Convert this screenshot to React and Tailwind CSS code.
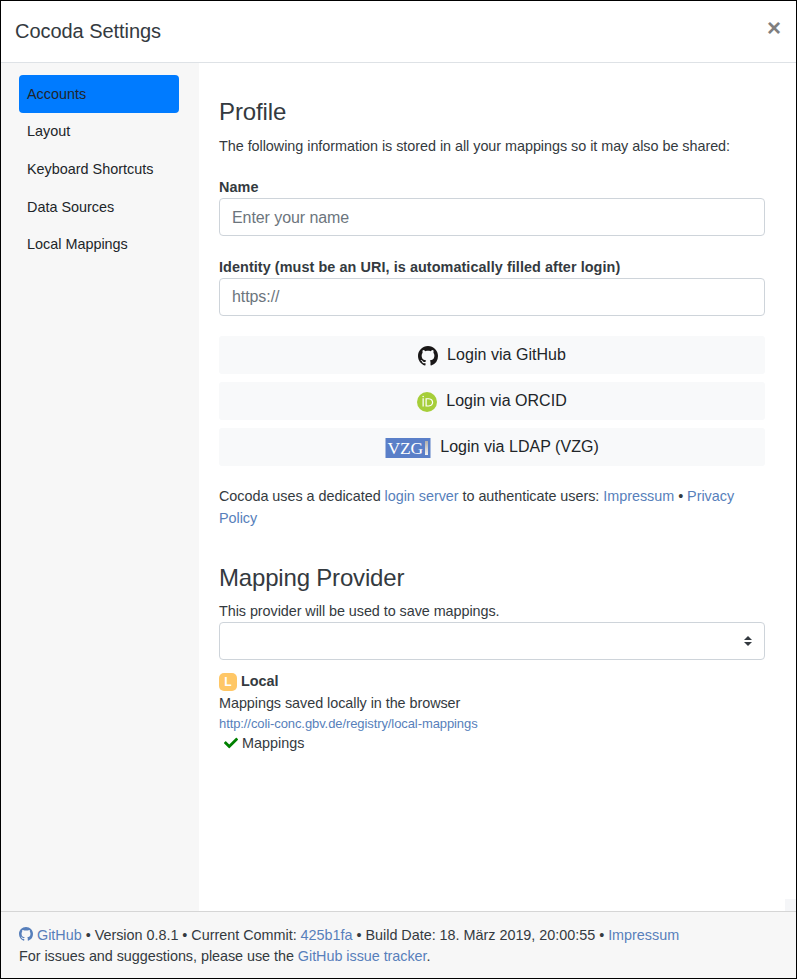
import React from "react";

const GITHUB_PATH =
  "M8 0C3.58 0 0 3.58 0 8c0 3.54 2.29 6.53 5.47 7.59.4.07.55-.17.55-.38 0-.19-.01-.82-.01-1.49-2.01.37-2.53-.49-2.69-.94-.09-.23-.48-.94-.82-1.13-.28-.15-.68-.52-.01-.53.63-.01 1.08.58 1.23.82.72 1.21 1.87.87 2.33.66.07-.52.28-.87.51-1.07-1.78-.2-3.64-.89-3.64-3.95 0-.87.31-1.59.82-2.15-.08-.2-.36-1.02.08-2.12 0 0 .67-.21 2.2.82.64-.18 1.32-.27 2-.27s1.36.09 2 .27c1.53-1.04 2.2-.82 2.2-.82.44 1.1.16 1.92.08 2.12.51.56.82 1.27.82 2.15 0 3.07-1.87 3.75-3.65 3.95.29.25.54.73.54 1.48 0 1.07-.01 1.93-.01 2.2 0 .21.15.46.55.38A8.01 8.01 0 0 0 16 8c0-4.42-3.58-8-8-8z";

function GitHubIcon({ className }) {
  return (
    <svg viewBox="0 0 16 16" fill="currentColor" className={className}>
      <path fillRule="evenodd" d={GITHUB_PATH} />
    </svg>
  );
}

function OrcidIcon() {
  return (
    <svg viewBox="0 0 256 256" className="mt-0.5 mr-[9px] size-5">
      <circle cx="128" cy="128" r="128" fill="#A6CE39" />
      <g fill="#fff">
        <path d="M70.9 79.1h15.4v107.1H70.9z" />
        <path d="M108.9 79.1h41.6c39.6 0 57 28.3 57 53.6 0 27.5-21.5 53.6-56.8 53.6h-41.8V79.1zm15.4 93.3h24.5c34.9 0 42.9-26.5 42.9-39.7 0-21.5-13.7-39.7-43.7-39.7h-23.7v79.4z" />
        <circle cx="78.6" cy="56.8" r="10.1" />
      </g>
    </svg>
  );
}

function VzgIcon() {
  return (
    <span className="mt-0.5 mr-[9px] flex h-5 w-[46px] items-center border-x border-[#a9bce0] bg-[#5a7fc8] pl-px">
      <span className="w-[36px] font-['Liberation_Serif',serif] text-[17.5px] leading-5 tracking-[-0.2px] text-white">VZG</span>
      <span className="ml-0.5 h-3.5 w-[3px] bg-gradient-to-b from-[#b0aeab] to-[#f4f4f4]" />
    </span>
  );
}

const A = ({ children }) => <a className="text-[#577fbb]">{children}</a>;

const TABS = ["Accounts", "Layout", "Keyboard Shortcuts", "Data Sources", "Local Mappings"];

function LoginButton({ icon, children }) {
  return (
    <button className="mb-2 flex h-[38px] w-full items-center justify-center rounded-[3px] bg-[#f8f9fa] text-base tracking-[0.03px] text-[#212529]">
      {icon}
      <span className="mt-px">{children}</span>
    </button>
  );
}

function Field({ label, placeholder, inputClass = "" }) {
  return (
    <div className="mt-5">
      <label className="block h-[22px] pt-px font-bold leading-[21px] tracking-[0.075px]">{label}</label>
      <input
        placeholder={placeholder}
        className={
          "block h-[38px] w-full rounded border border-[#ced4da] bg-white px-3 text-base tracking-[-0.08px] placeholder:text-[#6c757d] " +
          inputClass
        }
      />
    </div>
  );
}

export default function App() {
  return (
    <div className="flex h-[979px] w-[797px] flex-col border border-black bg-white font-['Liberation_Sans',Arial,sans-serif] text-[14.4px] leading-[21.6px] text-[#343a40]">
      <header className="flex h-[62px] shrink-0 justify-between border-b border-[#dee2e6] pr-[15px] pl-3.5">
        <h5 className="pt-[15px] text-xl leading-[30px] tracking-[-0.05px]">Cocoda Settings</h5>
        <button className="h-[54px] text-[24px] leading-[54px] font-bold text-[#7f7f7f]">×</button>
      </header>
      <div className="flex min-h-0 flex-1">
        <nav className="w-[198px] shrink-0 bg-[#f7f7f7] px-[18px] pt-3">
          {TABS.map((tab, i) => (
            <div
              key={tab}
              className={
                i === 0
                  ? "w-[160px] rounded bg-[#007bff] px-2 pt-[8.9px] pb-[7.1px] text-[#212529]"
                  : "w-[160px] rounded px-2 pt-[8.9px] pb-[7.1px] text-[#212529]"
              }
            >
              {tab}
            </div>
          ))}
        </nav>
        <main className="flex flex-1 flex-col pl-5">
          <div className="w-[546px] flex-1 pt-[35px]">
            <h4 className="mb-2 text-2xl leading-[28.8px] tracking-[-0.1px]">Profile</h4>
            <p className="h-[21px] pt-px leading-[21px] tracking-[-0.04px]">
              The following information is stored in all your mappings so it may also be shared:
            </p>
            <Field label="Name" placeholder="Enter your name" inputClass="pt-0.5" />
            <Field label="Identity (must be an URI, is automatically filled after login)" placeholder="https://" />
            <div className="mt-5">
              <LoginButton icon={<GitHubIcon className="mt-0.5 mr-[9px] size-5 text-[#191717]" />}>Login via GitHub</LoginButton>
              <LoginButton icon={<OrcidIcon />}>Login via ORCID</LoginButton>
              <LoginButton icon={<VzgIcon />}>Login via LDAP (VZG)</LoginButton>
            </div>
            <p className="mt-[19px] leading-[22px] tracking-[-0.035px]">
              Cocoda uses a dedicated <A>login server</A> to authenticate users: <A>Impressum</A> • <A>Privacy Policy</A>
            </p>
            <h4 className="mt-[35px] mb-2 text-2xl leading-[28.8px] tracking-[-0.18px]">Mapping Provider</h4>
            <p className="h-[21px] tracking-[-0.06px]">This provider will be used to save mappings.</p>
            <div className="flex h-[38px] items-center justify-end rounded border border-[#ced4da] pr-3">
              <svg viewBox="0 0 4 5" className="h-2.5 w-2" fill="#343a40">
                <path d="M2 0L0 2h4zm0 5L0 3h4z" />
              </svg>
            </div>
            <div className="mt-[11px] flex h-[22px] items-center font-bold">
              <span className="mr-1 flex size-[18px] items-center justify-center rounded-[5px] bg-[#ffc766] text-xs text-white">
                L
              </span>
              Local
            </div>
            <p className="tracking-[-0.05px]">Mappings saved locally in the browser</p>
            <p className="h-[19px] text-[13px] leading-[19px] tracking-[-0.09px]">
              <A>http://coli-conc.gbv.de/registry/local-mappings</A>
            </p>
            <div className="flex items-center pl-[5px]">
              <svg viewBox="0 0 512 512" className="mr-1 -mt-px size-3.5" fill="#008000">
                <path d="M173.898 439.404l-166.4-166.4c-9.997-9.997-9.997-26.206 0-36.204l36.203-36.204c9.997-9.998 26.207-9.998 36.204 0L192 312.69 432.095 72.596c9.997-9.997 26.207-9.997 36.204 0l36.203 36.204c9.997 9.997 9.997 26.206 0 36.204l-294.4 294.401c-9.998 9.997-26.207 9.997-36.204-.001z" />
              </svg>
              Mappings
            </div>
          </div>
          <div className="h-3 w-[11px] self-end bg-[#f5f6f8]" />
        </main>
      </div>
      <footer className="h-[67px] shrink-0 border-t border-[#d6d6d6] bg-[#f7f7f7] px-[18px] pt-[13px] leading-[21px]">
        <div className="tracking-[-0.02px]">
          <GitHubIcon className="mr-1 mb-1 inline size-3.5 text-[#577fbb]" />
          <A>GitHub</A> • Version 0.8.1 • Current Commit: <A>425b1fa</A> • Build Date: 18. März 2019, 20:00:55 • <A>Impressum</A>
        </div>
        <div className="tracking-[-0.045px]">
          For issues and suggestions, please use the <A>GitHub issue tracker</A>.
        </div>
      </footer>
    </div>
  );
}
